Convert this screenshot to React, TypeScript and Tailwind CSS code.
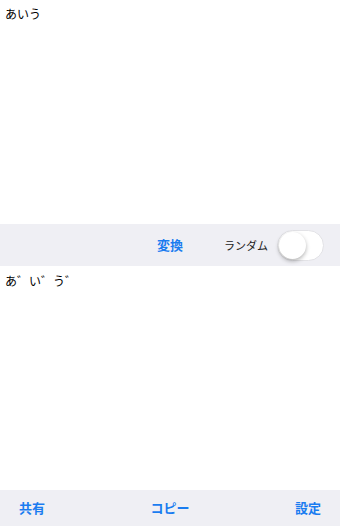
export default function App() {
  const font = { fontFamily: '"Noto Sans CJK JP", "Noto Sans", sans-serif' };
  return (
    <div className="flex h-[526px] w-[340px] flex-col bg-white text-black" style={font}>
      {/* Input */}
      <div className="h-[224px] px-[5px] pt-[5px] text-[12px] leading-[18px]">あいう</div>

      {/* Convert bar */}
      <div className="relative flex h-[42px] items-center bg-[#efeff4]">
        <button className="absolute left-1/2 -translate-x-1/2 text-[13px] font-bold text-[#1a7cf0]">
          変換
        </button>
        <div className="ml-auto mr-[16px] flex items-center gap-[9px]">
          <span className="text-[11px] text-[#222]">ランダム</span>
          <div className="flex h-[31px] w-[47px] items-center rounded-full border border-[#e2e2e6] bg-white p-[1px]">
            <div className="h-[27px] w-[27px] rounded-full bg-white shadow-[0_2px_4px_rgba(0,0,0,0.3)]" />
          </div>
        </div>
      </div>

      {/* Output */}
      <div className="flex-1 px-[5px] pt-[6px] text-[12px] leading-[18px]">あ゛い゛う゛</div>

      {/* Tab bar */}
      <div className="flex h-[36px] items-center justify-between bg-[#efeff4] px-[19px] text-[13px] font-bold text-[#1a7cf0]">
        <button>共有</button>
        <button>コピー</button>
        <button>設定</button>
      </div>
    </div>
  );
}
